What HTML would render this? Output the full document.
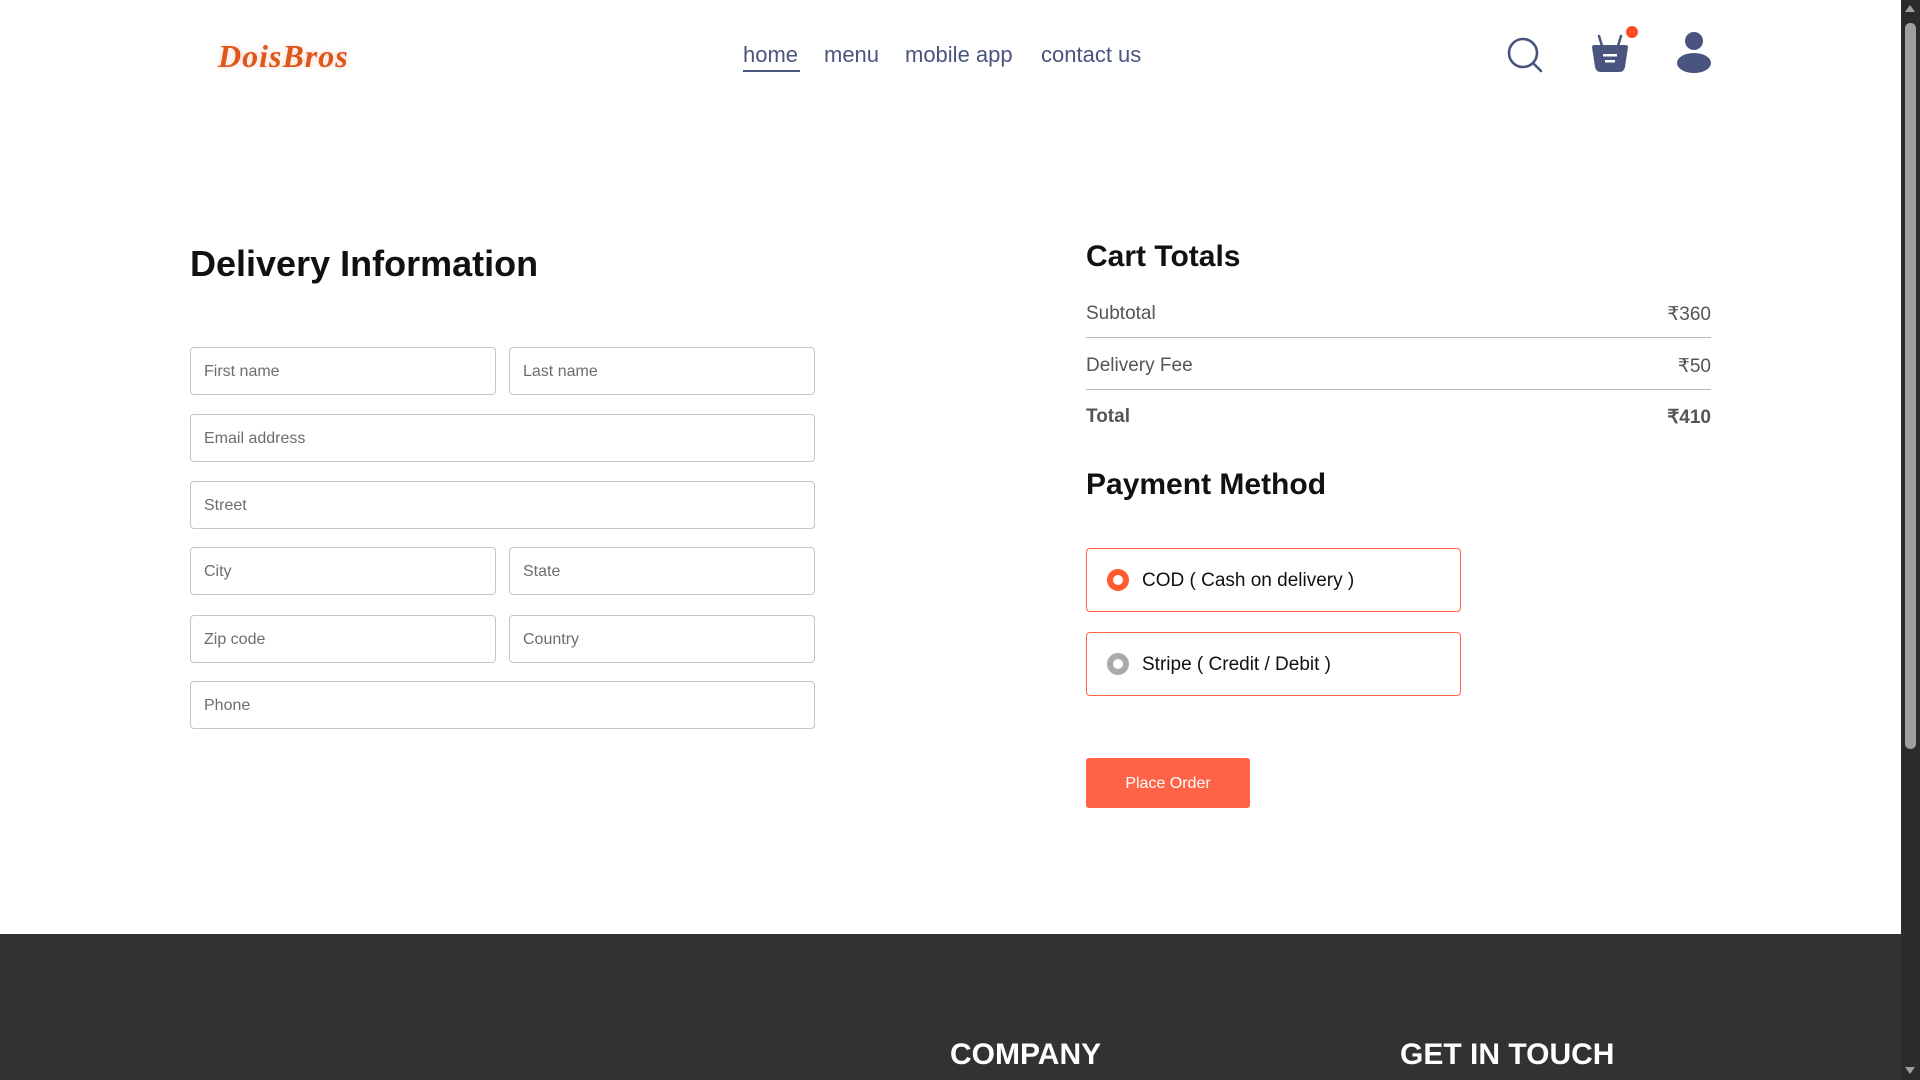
<!DOCTYPE html>
<html><head><meta charset="utf-8"><style>
*{margin:0;padding:0;box-sizing:border-box}
body{width:1920px;height:1080px;overflow:hidden;background:#fff;font-family:"Liberation Sans",sans-serif;position:relative}
.abs{position:absolute}
.logo{left:218px;top:38px;font-family:"Liberation Serif",serif;font-weight:bold;font-style:italic;font-size:32px;letter-spacing:1px;color:#e0561a;text-shadow:0 0 6px rgba(224,86,26,.25)}
.nav{top:42px;font-size:22px;color:#49557e}
.h1{font-weight:bold;color:#111}
.inp{position:absolute;height:48px;border:1px solid #c5c5c5;border-radius:4px;font-size:16px;color:#6d6d6d;padding-left:13px;line-height:48px}
.row{position:absolute;left:1086px;width:625px;font-size:19px;color:#555}
.row span{position:absolute;right:0}
.line{position:absolute;left:1086px;width:625px;height:1px;background:#bbb}
.pm{position:absolute;left:1086px;width:375px;height:64px;border:1px solid #ff6347;border-radius:4px;font-size:19px;color:#111}
.pm .r{position:absolute;left:20px;top:20px;width:22px;height:22px;border-radius:50%;border:6px solid #ff5b2e}
.pm .t{position:absolute;left:55px;top:21px}
</style></head><body>
<div class="abs logo">DoisBros</div>
<div class="abs nav" style="left:743px">home</div>
<div class="abs" style="left:743px;top:70px;width:57px;height:2px;background:#49557e"></div>
<div class="abs nav" style="left:824px">menu</div>
<div class="abs nav" style="left:905px">mobile app</div>
<div class="abs nav" style="left:1041px">contact us</div>
<svg class="abs" style="left:1490px;top:20px" width="240" height="70" viewBox="1490 20 240 70">
<circle cx="1523" cy="53" r="14" fill="none" stroke="#49557e" stroke-width="2.6"/>
<line x1="1533" y1="63" x2="1541" y2="71" stroke="#49557e" stroke-width="2.6" stroke-linecap="round"/>
<path d="M1602 46 L1599 36 M1618 46 L1621 36" stroke="#49557e" stroke-width="2.5" stroke-linecap="round"/>
<path d="M1592 47 Q1592 45 1595 45 L1625 45 Q1628 45 1628 47 L1625 67 Q1624 72 1619 72 L1601 72 Q1596 72 1595 67 Z" fill="#49557e"/>
<rect x="1603" y="54" width="14" height="2.5" fill="#fff"/><rect x="1605" y="60" width="10" height="2.5" fill="#fff"/>
<circle cx="1632" cy="32" r="6" fill="#ff4c24"/>
<circle cx="1694" cy="41" r="9" fill="#49557e"/>
<ellipse cx="1694" cy="63" rx="17" ry="10" fill="#49557e"/>
</svg>
<div class="abs h1" style="left:190px;top:243px;font-size:36px">Delivery Information</div>
<div class="inp" style="left:190px;top:347px;width:306px">First name</div>
<div class="inp" style="left:509px;top:347px;width:306px">Last name</div>
<div class="inp" style="left:190px;top:414px;width:625px">Email address</div>
<div class="inp" style="left:190px;top:481px;width:625px">Street</div>
<div class="inp" style="left:190px;top:547px;width:306px">City</div>
<div class="inp" style="left:509px;top:547px;width:306px">State</div>
<div class="inp" style="left:190px;top:615px;width:306px">Zip code</div>
<div class="inp" style="left:509px;top:615px;width:306px">Country</div>
<div class="inp" style="left:190px;top:681px;width:625px">Phone</div>
<div class="abs h1" style="left:1086px;top:240px;font-size:30px">Cart Totals</div>
<div class="row" style="top:303px">Subtotal<span>₹360</span></div>
<div class="line" style="top:337px"></div>
<div class="row" style="top:355px">Delivery Fee<span>₹50</span></div>
<div class="line" style="top:389px"></div>
<div class="row" style="top:406px;font-weight:bold">Total<span>₹410</span></div>
<div class="abs h1" style="left:1086px;top:468px;font-size:30px">Payment Method</div>
<div class="pm" style="top:548px"><div class="r"></div><div class="t">COD ( Cash on delivery )</div></div>
<div class="pm" style="top:632px"><div class="r" style="border-color:#aaa"></div><div class="t">Stripe ( Credit / Debit )</div></div>
<div class="abs" style="left:1086px;top:758px;width:164px;height:50px;background:#ff6347;border-radius:3px;color:#fff;font-size:16px;text-align:center;line-height:52px">Place Order</div>
<div class="abs" style="left:0;top:934px;width:1901px;height:146px;background:#323232"></div>
<div class="abs" style="left:950px;top:1038px;font-size:30px;font-weight:bold;color:#fff">COMPANY</div>
<div class="abs" style="left:1400px;top:1038px;font-size:30px;font-weight:bold;color:#fff">GET IN TOUCH</div>
<div class="abs" style="left:1901px;top:0;width:19px;height:1080px;background:#2b2b2b"></div>
<div class="abs" style="left:1905px;top:23px;width:11px;height:726px;background:#9f9f9f;border-radius:5px"></div>
<div class="abs" style="left:1905px;top:5px;width:0;height:0;border-left:5px solid transparent;border-right:5px solid transparent;border-bottom:7px solid #9f9f9f"></div>
<div class="abs" style="left:1905px;top:1067px;width:0;height:0;border-left:5px solid transparent;border-right:5px solid transparent;border-top:7px solid #9f9f9f"></div>
</body></html>
